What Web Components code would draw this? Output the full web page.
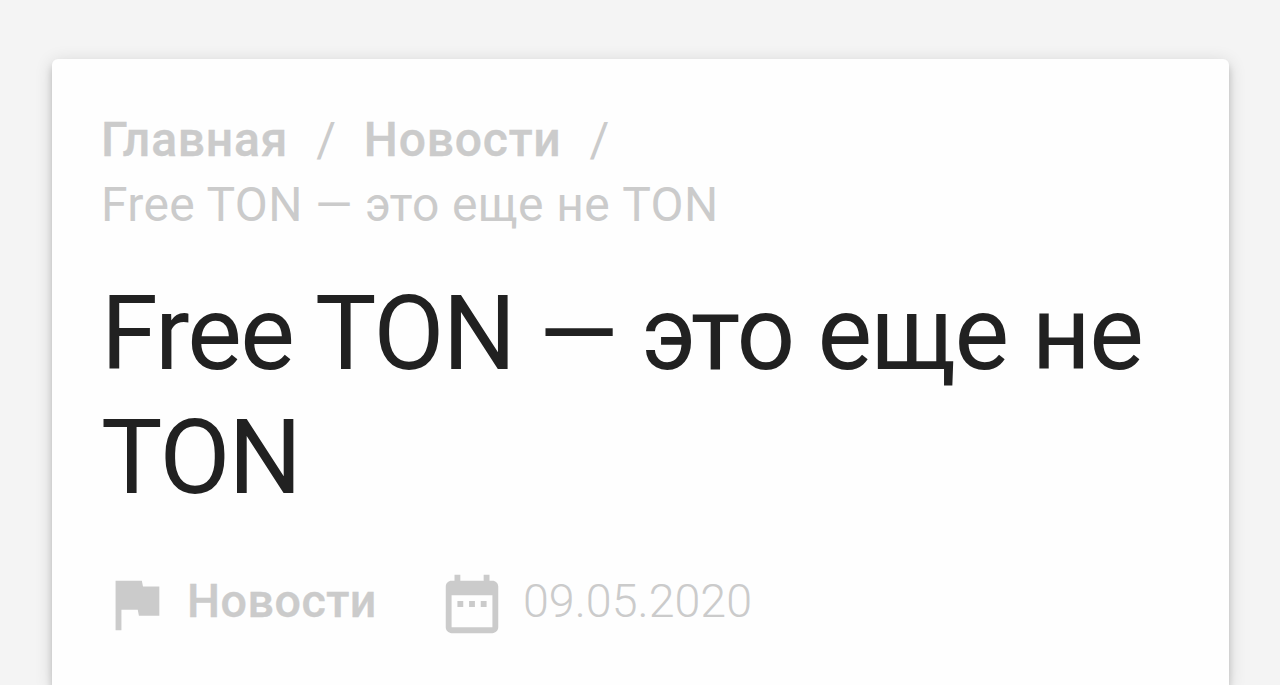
<!DOCTYPE html>
<html lang="ru">
<head>
<meta charset="utf-8">
<title>Free TON — это еще не TON</title>
<style>
  body {
    margin: 0;
    height: 685px;
    overflow: hidden;
    background: #f4f4f4;
    font-family: Roboto, "Liberation Sans", sans-serif;
    color: #cbcbcb;
  }
</style>
</head>
<body>
<news-card>
  <bread-crumbs slot="crumbs">
    <crumb-item linked>Главная</crumb-item>
    <crumb-item linked>Новости</crumb-item>
    <crumb-item>Free TON — это еще не TON</crumb-item>
  </bread-crumbs>
  <news-title slot="title">Free TON — это еще не TON</news-title>
  <meta-item slot="meta" icon="flag" strong>Новости</meta-item>
  <meta-item slot="meta" icon="date">09.05.2020</meta-item>
</news-card>

<script>
class BaseElement extends HTMLElement {
  constructor() {
    super()
    this.attachShadow({ mode: 'open' })
    this.shadowRoot.innerHTML = this.template()
  }
}

customElements.define('news-card', class extends BaseElement {
  template() {
    return `
      <style>
        :host {
          display: flex;
          flex-direction: column;
          box-sizing: border-box;
          height: 100%;
          padding: 59px 51px 0 52px;
        }
        article {
          flex: 1;
          padding: 48px 50px 0 49px;
          background: #fefefe;
          border-radius: 6px 6px 0 0;
          box-shadow:
            0 6px 7px rgba(0, 0, 0, .17),
            0 9px 3px -6px rgba(0, 0, 0, .2),
            0 3px 18px rgba(0, 0, 0, .14);
        }
        footer { display: flex; gap: 60px; margin-top: 49px; }
      </style>
      <article>
        <slot name="crumbs"></slot>
        <slot name="title"></slot>
        <footer><slot name="meta"></slot></footer>
      </article>`
  }
})

customElements.define('bread-crumbs', class extends BaseElement {
  template() {
    return `
      <style>
        :host { display: flex; flex-wrap: wrap; font-size: 48px; line-height: 65px; }
      </style>
      <slot></slot>`
  }
})

customElements.define('crumb-item', class extends BaseElement {
  template() {
    return `
      <style>
        :host { display: block; white-space: nowrap; letter-spacing: .36px; }
        i { display: none; margin: 0 27.5px 0 28px; font-style: normal; }
        :host([linked]) span {
          font-weight: 500;
          letter-spacing: .8px;
          -webkit-text-stroke: .4px currentColor;
        }
        :host([linked]) i { display: inline; }
      </style>
      <span><slot></slot></span><i>/</i>`
  }
})

customElements.define('news-title', class extends BaseElement {
  template() {
    return `
      <style>
        :host { display: block; margin-top: 35px; }
        h1 {
          margin: 0;
          color: #212121;
          font-size: 103px;
          font-weight: 400;
          line-height: 124px;
          letter-spacing: -1.66px;
        }
      </style>
      <h1><slot></slot></h1>`
  }
})

const icons = {
  flag: '<path d="M14.4 6 14 4H5v17h2v-7h5.600l.4 2h7V6z"/>',
  date: '<path d="M9 11H7v2h2zm4 0h-2v2h2zm4 0h-2v2h2zm2-7h-1V2h-2v2H8V2H6v2H5c-1.110 0-1.990.9-1.990 2L3 20c0 1.100.890 2 2 2h14c1.100 0 2-.9 2-2V6c0-1.100-.9-2-2-2m0 16H5V9h14z"/>'
}

customElements.define('meta-item', class extends BaseElement {
  template() {
    return `
      <style>
        :host { display: flex; align-items: center; font-size: 46.6px; line-height: 60px; font-weight: 300; }
        :host([strong]) { font-weight: 500; letter-spacing: .5px; }
        :host([strong]) span { -webkit-text-stroke: .4px currentColor; }
        svg { width: 70px; height: 70px; margin-right: 16px; fill: currentColor; }
        span { padding-bottom: 7px; }
      </style>
      <svg viewBox="0 0 24 24"></svg><span><slot></slot></span>`
  }

  connectedCallback() {
    this.shadowRoot.querySelector('svg').innerHTML = icons[this.getAttribute('icon')]
  }
})
</script>
</body>
</html>
